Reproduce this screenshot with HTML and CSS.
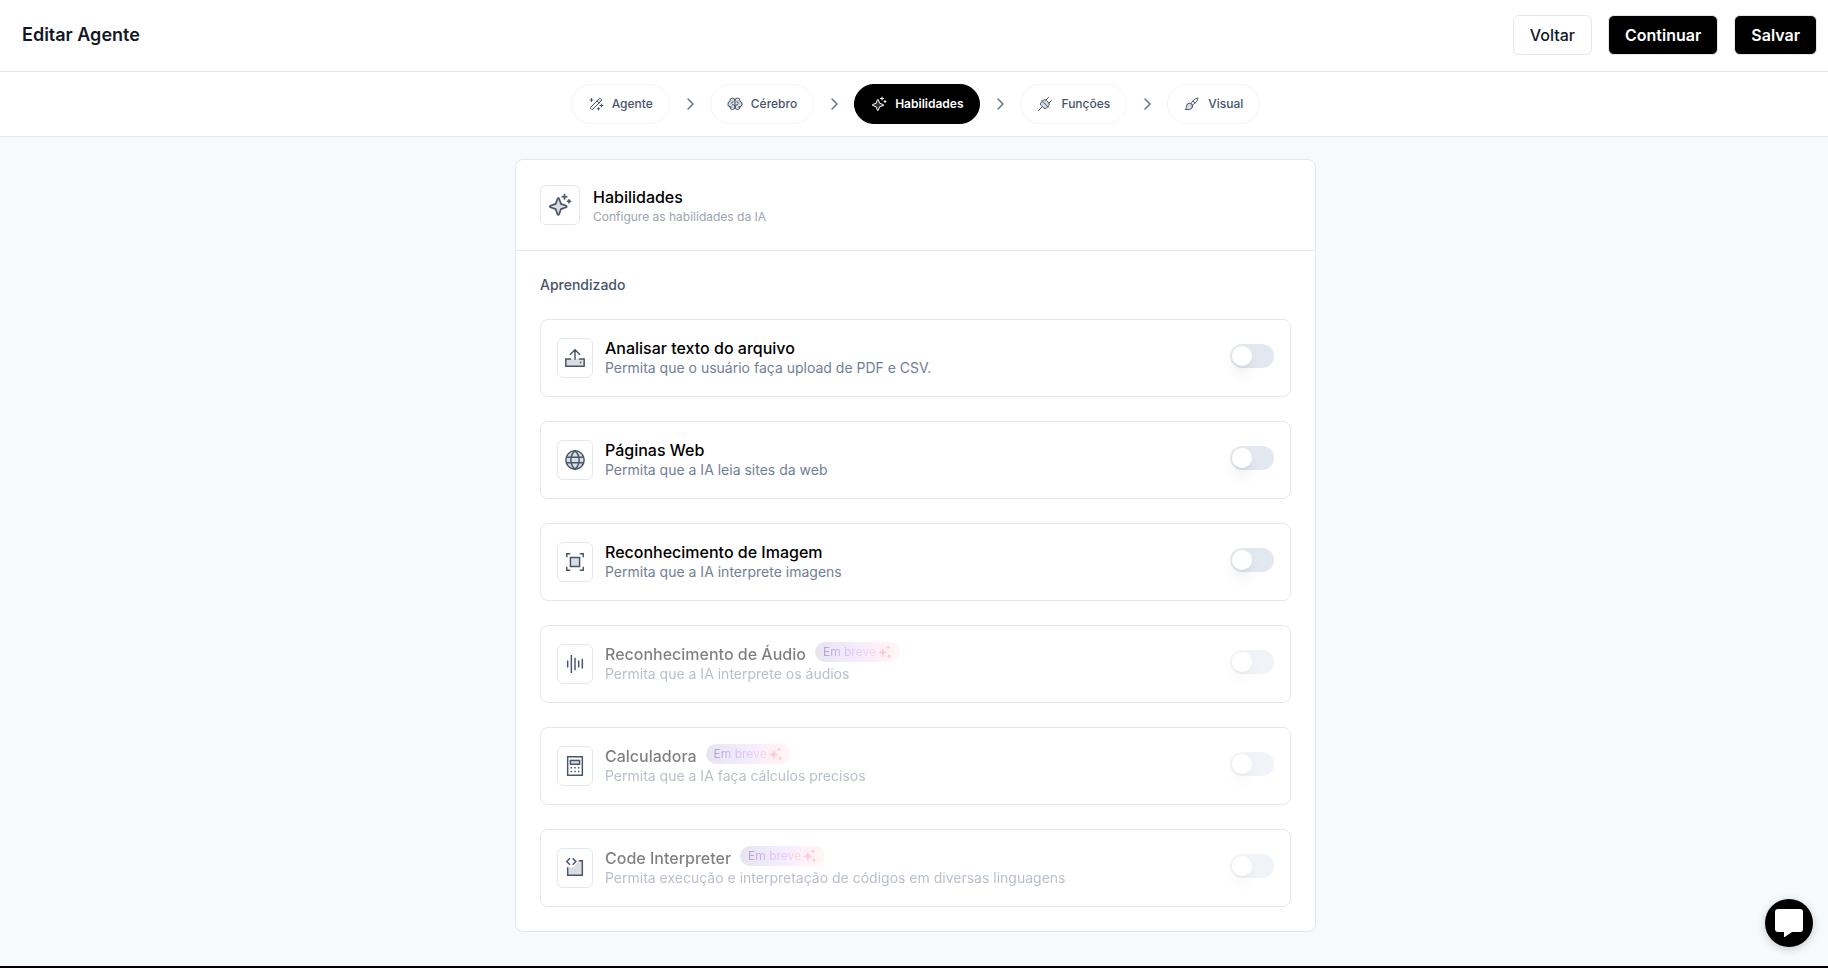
FILE: index.html
```html
<!DOCTYPE html>
<html lang="pt-BR">
<head>
<meta charset="UTF-8">
<meta name="viewport" content="width=device-width, initial-scale=1.0">
<title>Editar Agente</title>
<link rel="stylesheet" href="styles.css">
</head>
<body>
<svg class="sprite" aria-hidden="true">
    <symbol id="sparkle" viewBox="0 0 256 256">
        <path class="tone" d="M194.800 151.300L138 172l-20.700 56.800a8 8 0 0 1-15 0L82 172l-56.800-20.700a8 8 0 0 1 0-15L82 116l20.700-56.800a8 8 0 0 1 15 0L138 116l56.800 20.700a8 8 0 0 1 0 14.600z"/>
        <path d="M194.800 151.300L138 172l-20.700 56.800a8 8 0 0 1-15 0L82 172l-56.800-20.700a8 8 0 0 1 0-15L82 116l20.700-56.800a8 8 0 0 1 15 0L138 116l56.800 20.700a8 8 0 0 1 0 14.600zM176 16v48M224 72v32M152 40h48M208 88h32"/>
    </symbol>
    <symbol id="soon" viewBox="0 0 14 14">
        <path d="M4.800 2.500L6 6.100L9.600 7.400L6 8.700L4.800 12.300L3.600 8.700L0 7.400L3.600 6.100zM10 0L10.700 1.800L12.500 2.500L10.700 3.200L10 5L9.300 3.200L7.500 2.500L9.300 1.800zM11 8.600L11.800 10.400L13.700 11.200L11.800 12L11 13.800L10.200 12L8.300 11.200L10.200 10.400z"/>
    </symbol>
</svg>

<div class="page">
    <header class="topbar">
        <h1>Editar Agente</h1>
        <div class="actions">
            <button type="button" class="btn">Voltar</button>
            <button type="button" class="btn btn-dark">Continuar</button>
            <button type="button" class="btn btn-dark">Salvar</button>
        </div>
    </header>

    <nav class="steps">
        <a href="#agente" class="step">
            <svg class="icon" viewBox="0 0 256 256"><path class="tone" d="M146 72l38-38 38 38-38 38z"/><path d="M216 72L72 216a8 8 0 0 1-11 0l-21-21a8 8 0 0 1 0-11L184 40a8 8 0 0 1 11 0l21 21a8 8 0 0 1 0 11zM144 80l32 32M216 128v48M192 152h48M56 40v48M32 64h48M168 184v40M148 204h40"/></svg>
            Agente
        </a>
        <svg class="chevron" viewBox="0 0 16 16"><path d="M6 3l5 5-5 5"/></svg>
        <a href="#cerebro" class="step">
            <svg class="icon" viewBox="0 0 256 256"><path class="tone" d="M128 72a40 40 0 0 0-80 0v2a48 48 0 0 0 0 108v2a40 40 0 0 0 80 0a40 40 0 0 0 80 0v-2a48 48 0 0 0 0-108v-2a40 40 0 0 0-80 0z"/><path d="M88 136a40 40 0 1 1-40 40v-6M168 136a40 40 0 1 0 40 40v-6M128 176V72a40 40 0 1 1 80 0v6M128 72a40 40 0 1 0-80 0v6M72 176h-8A48 48 0 0 1 48 83M184 176h8a48 48 0 0 0 16-93M188 112h-4a24 24 0 0 1-24-24v-4M68 112h4a24 24 0 0 0 24-24v-4"/></svg>
            Cérebro
        </a>
        <svg class="chevron" viewBox="0 0 16 16"><path d="M6 3l5 5-5 5"/></svg>
        <a href="#habilidades" class="step active" aria-current="step">
            <svg class="icon"><use href="#sparkle"/></svg>
            Habilidades
        </a>
        <svg class="chevron" viewBox="0 0 16 16"><path d="M6 3l5 5-5 5"/></svg>
        <a href="#funcoes" class="step">
            <svg class="icon" viewBox="0 0 256 256"><path class="tone" d="M88 84l15-15a32 32 0 0 1 45 0l39 39a32 32 0 0 1 0 45l-34 38a32 32 0 0 1-45 0l-43-43a32 32 0 0 1 0-45z"/><path d="M76 72l108 108M172 168l-19 23a32 32 0 0 1-45 0l-43-43a32 32 0 0 1 0-45l22-19M88 84l15-15a32 32 0 0 1 45 0l39 39a32 32 0 0 1 0 45l-15 15M86 170l-62 62M144 64l40-40M192 112l40-40"/></svg>
            Funções
        </a>
        <svg class="chevron" viewBox="0 0 16 16"><path d="M6 3l5 5-5 5"/></svg>
        <a href="#visual" class="step">
            <svg class="icon" viewBox="0 0 256 256"><path class="tone" d="M136 164a52 52 0 0 1-52 52H20s20-16 20-52a48 48 0 0 1 96 0z"/><path d="M136 164a52 52 0 0 1-52 52H20s20-16 20-52a48 48 0 0 1 96 0zM112 120c26-38 66-88 108-88 4 0 4 4 4 4 0 42-50 82-90 110M144 82a72 72 0 0 1 30 30"/></svg>
            Visual
        </a>
    </nav>

    <main class="content">
        <section class="card">
            <div class="card-header">
                <span class="icon-box icon-box-lg"><svg class="icon"><use href="#sparkle"/></svg></span>
                <div class="card-title">
                    <h2>Habilidades</h2>
                    <p>Configure as habilidades da IA</p>
                </div>
            </div>
            <div class="card-body">
                <h3>Aprendizado</h3>

                <div class="skill">
                    <span class="icon-box">
                        <svg class="icon" viewBox="0 0 24 24"><path class="tone" d="M2 13h20v8H2z"/><path d="M7 13H2v8h20v-8h-5M12 13V3M7 8l5-5 5 5M18 17v0"/></svg>
                    </span>
                    <div class="skill-text">
                        <label for="arquivo">Analisar texto do arquivo</label>
                        <p>Permita que o usuário faça upload de PDF e CSV.</p>
                    </div>
                    <input type="checkbox" role="switch" class="switch" id="arquivo">
                </div>

                <div class="skill">
                    <span class="icon-box">
                        <svg class="icon" viewBox="0 0 24 24"><circle class="tone" cx="12" cy="12" r="10"/><circle cx="12" cy="12" r="10"/><path d="M12 2c-6 5-6 15 0 20M12 2c6 5 6 15 0 20M3 9h18M3 15h18"/></svg>
                    </span>
                    <div class="skill-text">
                        <label for="web">Páginas Web</label>
                        <p>Permita que a IA leia sites da web</p>
                    </div>
                    <input type="checkbox" role="switch" class="switch" id="web">
                </div>

                <div class="skill">
                    <span class="icon-box">
                        <svg class="icon" viewBox="0 0 24 24"><path class="tone" d="M7 7h10v10H7z"/><path d="M7 7h10v10H7zM3 6V3h3M18 3h3v3M21 18v3h-3M6 21H3v-3"/></svg>
                    </span>
                    <div class="skill-text">
                        <label for="imagem">Reconhecimento de Imagem</label>
                        <p>Permita que a IA interprete imagens</p>
                    </div>
                    <input type="checkbox" role="switch" class="switch" id="imagem">
                </div>

                <div class="skill disabled">
                    <span class="icon-box">
                        <svg class="icon" viewBox="0 0 24 24"><path d="M4 9v6M8 3v18M12 6v12M16 9v6M20 7v9"/></svg>
                    </span>
                    <div class="skill-text">
                        <div class="skill-title">
                            <label for="audio">Reconhecimento de Áudio</label>
                            <span class="badge"><span>Em breve</span><svg><use href="#soon"/></svg></span>
                        </div>
                        <p>Permita que a IA interprete os áudios</p>
                    </div>
                    <input type="checkbox" role="switch" class="switch" id="audio" disabled>
                </div>

                <div class="skill disabled">
                    <span class="icon-box">
                        <svg class="icon" viewBox="0 0 24 24"><path class="tone" d="M7 5h10v5H7z"/><path d="M4 2h16v20H4zM7 6h10v4H7z"/><path d="M8 14v0M12 14v0M16 14v0M8 18v0M12 18v0M16 18v0"/></svg>
                    </span>
                    <div class="skill-text">
                        <div class="skill-title">
                            <label for="calculadora">Calculadora</label>
                            <span class="badge"><span>Em breve</span><svg><use href="#soon"/></svg></span>
                        </div>
                        <p>Permita que a IA faça cálculos precisos</p>
                    </div>
                    <input type="checkbox" role="switch" class="switch" id="calculadora" disabled>
                </div>

                <div class="skill disabled">
                    <span class="icon-box">
                        <svg class="icon" viewBox="0 0 24 24"><path class="tone" d="M4 12l7-1 5-7h4v16H4z"/><path d="M4 12v8h16V4h-3M6 2L3 5l3 3M10 2l3 3-3 3"/></svg>
                    </span>
                    <div class="skill-text">
                        <div class="skill-title">
                            <label for="codigo">Code Interpreter</label>
                            <span class="badge"><span>Em breve</span><svg><use href="#soon"/></svg></span>
                        </div>
                        <p>Permita execução e interpretação de códigos em diversas linguagens</p>
                    </div>
                    <input type="checkbox" role="switch" class="switch" id="codigo" disabled>
                </div>
            </div>
        </section>
    </main>
</div>

<button type="button" class="chat" aria-label="Abrir chat">
    <svg viewBox="0 0 28 28"><path d="M3 0h22a3 3 0 0 1 3 3v17a3 3 0 0 1-3 3h-8l-8 5.500V23H3a3 3 0 0 1-3-3V3a3 3 0 0 1 3-3z"/></svg>
</button>
</body>
</html>
```
FILE: styles.css
```css
* {
    box-sizing: border-box;
}
body {
    margin: 0;
    font-family: Inter, sans-serif;
    font-size: 16px;
    line-height: 24px;
    color: #111827;
    background: #f6fafd;
}
h1, h2, h3, p {
    margin: 0;
}
.sprite {
    position: absolute;
    width: 0;
    height: 0;
}
.page {
    min-height: 100vh;
    display: flex;
    flex-direction: column;
    border-bottom: 2px solid #000;
}

/* top bar */
.topbar {
    display: flex;
    align-items: center;
    justify-content: space-between;
    height: 72px;
    padding: 0 11px 2px 22px;
    background: #fff;
    border-bottom: 1px solid #e2e8f0;
}
.topbar h1 {
    font-size: 18px;
    font-weight: 600;
}
.actions {
    display: flex;
    gap: 16px;
}
.btn {
    height: 40px;
    padding: 0 16px;
    font: 500 16px Inter, sans-serif;
    color: #111827;
    background: #fff;
    border: 1px solid #e2e8f0;
    border-radius: 6px;
    cursor: pointer;
}
.btn-dark {
    font-weight: 600;
    color: #fff;
    background: #000;
}

/* icons */
.icon {
    width: 16px;
    height: 16px;
    fill: none;
    stroke: currentColor;
    stroke-width: 16;
    stroke-linecap: round;
    stroke-linejoin: round;
}
.tone {
    fill: currentColor;
    stroke: none;
    opacity: 0.2;
}

/* steps */
.steps {
    display: flex;
    align-items: center;
    justify-content: center;
    gap: 12px;
    height: 65px;
    padding-left: 3px;
    background: #fff;
    border-bottom: 1px solid #e2e8f0;
}
.step {
    display: flex;
    align-items: center;
    gap: 8px;
    height: 40px;
    padding: 0 16px;
    font-size: 12px;
    font-weight: 500;
    color: #475569;
    text-decoration: none;
    border: 1px solid #f1f5f9;
    border-radius: 20px;
}
.step.active {
    font-weight: 600;
    color: #fff;
    background: #000;
    border-color: #000;
}
.chevron {
    width: 16px;
    height: 16px;
    fill: none;
    stroke: #64748b;
    stroke-width: 1.5;
    stroke-linecap: round;
    stroke-linejoin: round;
}

/* card */
.content {
    flex: 1;
    padding: 22px 0 34px 3px;
}
.card {
    max-width: 801px;
    margin: 0 auto;
    background: #fff;
    border: 1px solid #e2e8f0;
    border-radius: 8px;
}
.card-header {
    display: flex;
    align-items: center;
    gap: 13px;
    height: 91px;
    padding: 0 24px;
    border-bottom: 1px solid #e2e8f0;
}
.card-title {
    padding-top: 3px;
}
.card-header h2 {
    font-size: 16px;
    font-weight: 500;
    line-height: 20px;
    color: #000;
}
.card-header p {
    font-size: 12px;
    line-height: 20px;
    color: #9ca3af;
}
.card-body {
    display: flex;
    flex-direction: column;
    gap: 24px;
    padding: 24px;
}
.card-body h3 {
    font-size: 14px;
    font-weight: 500;
    line-height: 20px;
    color: #475569;
}
.icon-box {
    display: flex;
    flex: none;
    align-items: center;
    justify-content: center;
    width: 36px;
    height: 40px;
    color: #475569;
    background: #fff;
    border: 1px solid #e2e8f0;
    border-radius: 6px;
}
.icon-box .icon {
    width: 22px;
    height: 22px;
    stroke-width: 1.6;
    stroke-linecap: square;
    stroke-linejoin: miter;
}
.icon-box-lg {
    width: 40px;
}
.icon-box-lg .icon {
    width: 24px;
    height: 24px;
    stroke-width: 18;
    stroke-linecap: round;
    stroke-linejoin: round;
}

/* skills */
.skill {
    display: flex;
    align-items: center;
    gap: 12px;
    height: 78px;
    padding: 0 16px;
    border: 1px solid #e2e8f0;
    border-radius: 8px;
}
.skill-text {
    flex: 1;
}
.skill-title {
    display: flex;
    gap: 9px;
    height: 20px;
}
.skill label {
    display: block;
    font-weight: 500;
    line-height: 20px;
    color: #000;
}
.skill-text p {
    font-size: 14px;
    line-height: 20px;
    color: #718096;
}
.disabled .skill-text,
.disabled .switch {
    opacity: 0.5;
}
.badge {
    display: flex;
    align-items: center;
    gap: 2px;
    height: 20px;
    margin-top: -2px;
    padding: 0 8px;
    font-size: 12px;
    background: linear-gradient(90deg, #cfcdde, #e9dcff 50%, #ffe4f0 75%, #fff1f0);
    border-radius: 10px;
}
.badge span {
    color: transparent;
    background: linear-gradient(90deg, #6b3fa8, #b070fa 35%, #c896fc 65%, #ffb0bd);
    -webkit-background-clip: text;
    background-clip: text;
}
.badge svg {
    width: 14px;
    height: 14px;
    fill: #ff99a8;
}
.switch {
    appearance: none;
    width: 44px;
    height: 24px;
    margin: 0 0 4px;
    padding: 2px;
    background: #e2e8f0;
    border-radius: 12px;
    cursor: pointer;
}
.switch::before {
    content: "";
    display: block;
    width: 20px;
    height: 20px;
    background: #fff;
    border-radius: 50%;
    box-shadow: 0 10px 15px -3px rgba(0,0,0,0.1), 0 4px 6px -4px rgba(0,0,0,0.1);
}
.switch:checked {
    background: #000;
}
.switch:checked::before {
    margin-left: 20px;
}
.switch:disabled {
    cursor: not-allowed;
}

/* chat */
.chat {
    position: fixed;
    right: 15px;
    bottom: 21px;
    display: flex;
    align-items: center;
    justify-content: center;
    width: 48px;
    height: 48px;
    padding: 0;
    background: #000;
    border: none;
    border-radius: 50%;
    box-shadow: 0 2px 8px rgba(0,0,0,0.2);
    cursor: pointer;
}
.chat svg {
    width: 28px;
    height: 28px;
    fill: #fff;
}
```
